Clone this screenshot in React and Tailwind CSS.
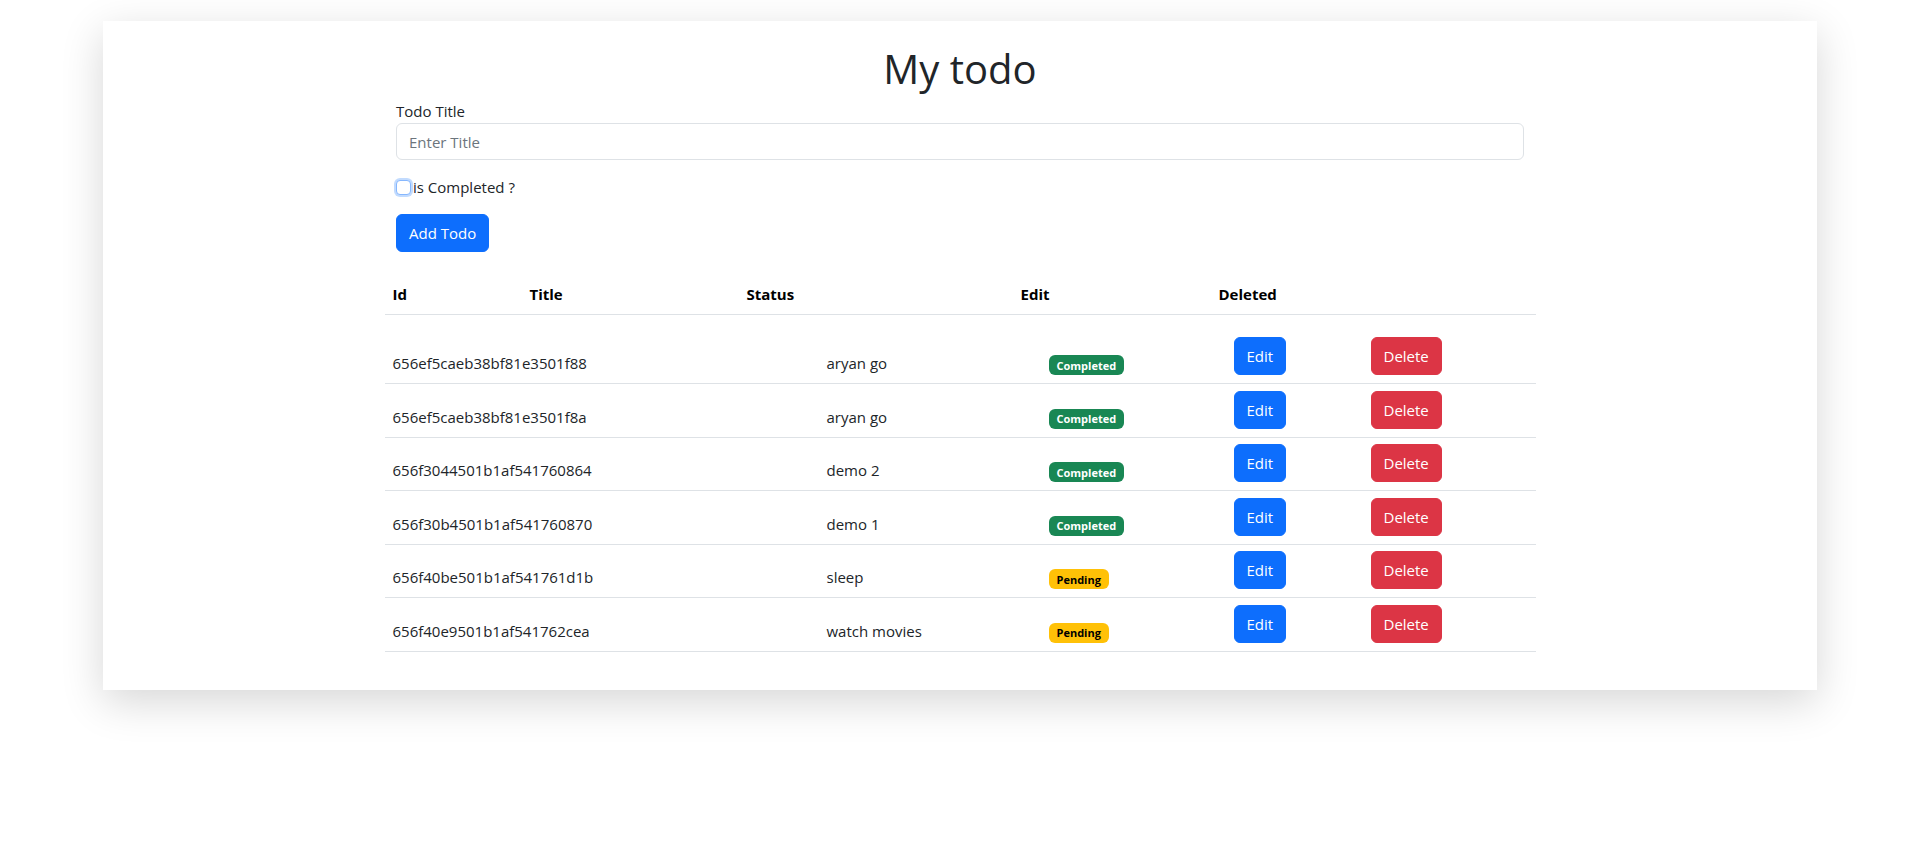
import React from "react";

const todos = [
  { id: "656ef5caeb38bf81e3501f88", title: "aryan go", done: true },
  { id: "656ef5caeb38bf81e3501f8a", title: "aryan go", done: true },
  { id: "656f3044501b1af541760864", title: "demo 2", done: true },
  { id: "656f30b4501b1af541760870", title: "demo 1", done: true },
  { id: "656f40be501b1af541761d1b", title: "sleep", done: false },
  { id: "656f40e9501b1af541762cea", title: "watch movies", done: false },
];

function StatusBadge({ done }) {
  if (done) {
    return (
      <span className="inline-flex items-center h-5 px-[8px] rounded-[6px] bg-[#198754] text-white text-[11px] leading-none font-bold">
        Completed
      </span>
    );
  }
  return (
    <span className="inline-flex items-center h-5 px-[8px] rounded-[6px] bg-[#ffc107] text-black text-[11px] leading-none font-bold">
      Pending
    </span>
  );
}

export default function App() {
  return (
    <div className="min-h-screen bg-white pt-[21px] pb-10 font-['Open_Sans',sans-serif] text-[15px] leading-6 text-[#212529]">
      <div className="mx-[103px] bg-white shadow-[0_12px_40px_rgba(0,0,0,0.16)] flex flex-col items-center pt-[24px] pb-[38px]">
        {/* 제목 */}
        <h1 className="text-[40px] leading-[48px] font-medium">My todo</h1>

        {/* 입력 폼 */}
        <form className="w-[1128px] mt-[6px]" onSubmit={(e) => e.preventDefault()}>
          <label className="block">Todo Title</label>
          <input
            type="text"
            placeholder="Enter Title"
            className="block w-full h-[37px] px-3 bg-white border border-[#dee2e6] rounded-[6px] outline-none placeholder:text-[#6c757d]"
          />
          <div className="mt-[15px] flex items-center h-6">
            <input
              type="checkbox"
              className="appearance-none w-[15px] h-[15px] bg-white border border-[#86b7fe] rounded-[4px] shadow-[0_0_0_2px_rgba(13,110,253,0.25)]"
            />
            <label className="ml-[2px]">is Completed ?</label>
          </div>
          <button
            type="submit"
            className="mt-[15px] h-[38px] px-3 border border-[#0d6efd] rounded-[6px] bg-[#0d6efd] text-white"
          >
            Add Todo
          </button>
        </form>

        {/* 목록 */}
        <div className="w-[1151px] mt-[22px]">
          <div className="grid grid-cols-[137px_217px_274px_198px_325px] py-2 border-b border-[#dee2e6] font-bold text-black">
            <div className="pl-2">Id</div>
            <div className="pl-2">Title</div>
            <div className="pl-2">Status</div>
            <div className="pl-2">Edit</div>
            <div className="pl-2">Deleted</div>
          </div>

          {todos.map((t, i) => (
            <div
              key={t.id}
              className={
                "grid grid-cols-[434px_222px_185px_137px_173px] items-end pb-2 border-b border-[#dee2e6] " +
                (i === 0 ? "h-[69px]" : "h-[53.6px]")
              }
            >
              <div className="pl-2">{t.id}</div>
              <div className="pl-2">{t.title}</div>
              <div className="pl-2 flex">
                <StatusBadge done={t.done} />
              </div>
              <div className="pl-2">
                <button className="h-[38px] px-3 border border-[#0d6efd] rounded-[6px] bg-[#0d6efd] text-white">
                  Edit
                </button>
              </div>
              <div className="pl-2">
                <button className="h-[38px] px-3 border border-[#dc3545] rounded-[6px] bg-[#dc3545] text-white">
                  Delete
                </button>
              </div>
            </div>
          ))}
        </div>
      </div>
    </div>
  );
}
